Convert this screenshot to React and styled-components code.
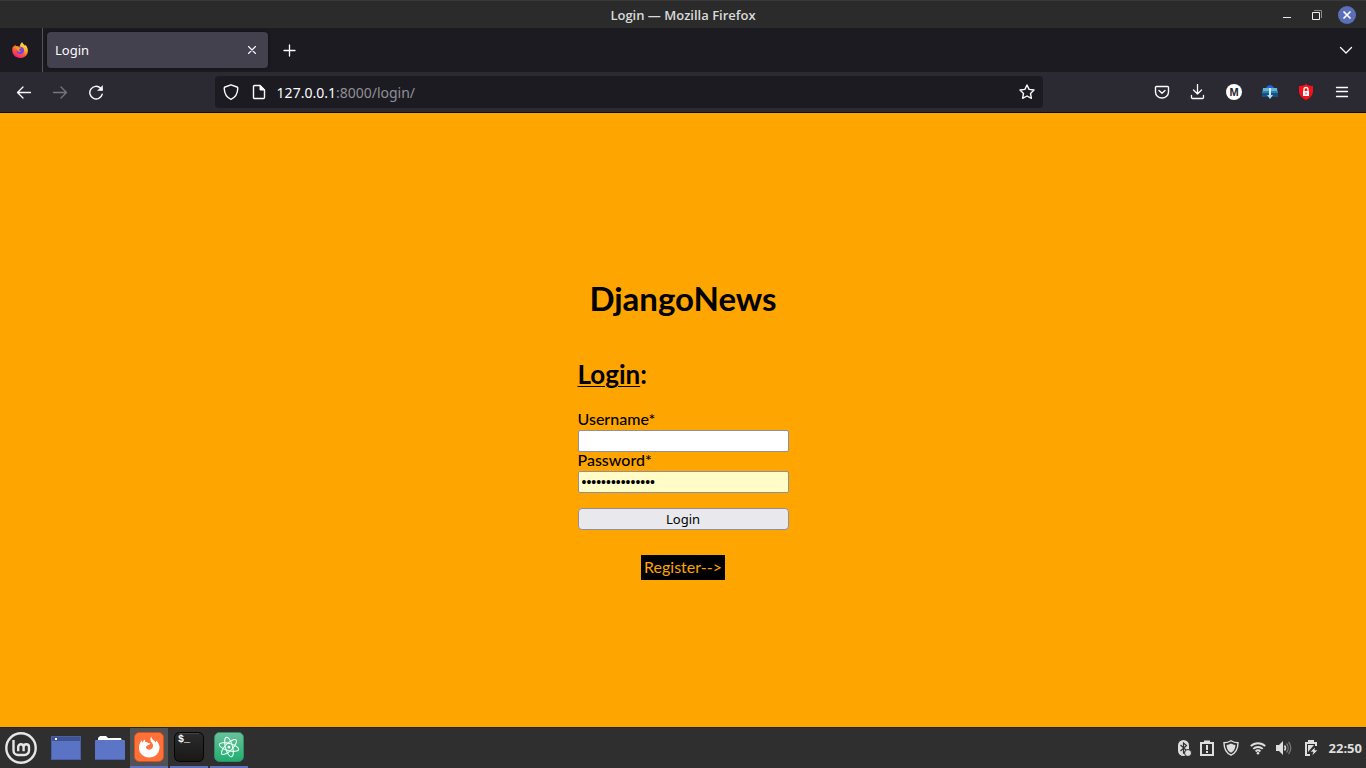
import React from "react";
import styled, { createGlobalStyle } from "styled-components";

const ui = '"Noto Sans", "Open Sans", sans-serif';
const display = 'Lato, "Open Sans", sans-serif';

const GlobalStyle = createGlobalStyle`
  *, *::before, *::after { box-sizing: border-box; }
  body { margin: 0; background: #ffa500; font-family: ${ui}; }
  button, input { font: inherit; color: inherit; margin: 0; }
  svg { display: block; flex: none; }
`;

const Desktop = styled.div`
  display: flex;
  flex-direction: column;
  min-height: 100vh;
`;

/* Window title bar */
const TitleBar = styled.header`
  display: grid;
  grid-template-columns: 1fr auto 1fr;
  align-items: center;
  height: 28px;
  padding: 0 4px;
  background: #2b2b2b;
  border-top: 1px solid #3a3a3a;
`;

const WindowTitle = styled.div`
  grid-column: 2;
  font-family: "Open Sans", sans-serif;
  font-size: 13px;
  font-weight: 600;
  line-height: 20px;
  color: #dadada;
`;

const WindowControls = styled.div`
  display: flex;
  justify-content: flex-end;
`;

const IconButton = styled.button`
  display: flex;
  align-items: center;
  justify-content: center;
  flex: none;
  width: ${(p) => p.$width || 36}px;
  height: ${(p) => p.$height || 32}px;
  padding: 0;
  border: 0;
  background: none;
  color: ${(p) => (p.disabled ? "#77767d" : "#fbfbfe")};
`;

/* Tab strip */
const TabStrip = styled.div`
  display: flex;
  align-items: center;
  height: 44px;
  background: #1c1b22;
`;

const ViewSlot = styled.div`
  display: flex;
  align-items: center;
  height: 44px;
  padding-right: 2px;
  margin-right: 4px;
  border-right: 1px solid #55545c;
`;

const Tab = styled.div`
  display: flex;
  align-items: center;
  justify-content: space-between;
  width: 221px;
  height: 36px;
  padding: 0 4px 0 8px;
  border-radius: 4px;
  background: #42414d;
  box-shadow: 0 0 4px rgba(0, 0, 0, 0.5);
  font-size: 13px;
  color: #fbfbfe;
`;

const Spacer = styled.div`
  flex: ${(p) => p.$grow || 1} 1 0;
`;

const TabsEnd = styled.div`
  padding-right: 2px;
`;

/* Navigation bar */
const NavBar = styled.nav`
  display: flex;
  align-items: center;
  height: 41px;
  padding: 0 6px;
  background: #2b2a33;
  border-bottom: 1px solid #0c0c0d;
`;

const AddressBar = styled.form`
  display: flex;
  align-items: center;
  flex: 828 1 0;
  height: 32px;
  padding: 0 2px;
  border-radius: 4px;
  background: #1c1b22;
`;

const Address = styled.div`
  flex: 1;
  padding: 2px 0 0 4px;
  font-size: 14px;
  line-height: 20px;
  color: #8f8f98;
`;

const Host = styled.span`
  color: #fbfbfe;
`;

/* Page */
const Page = styled.main`
  display: flex;
  flex: 1;
  flex-direction: column;
  align-items: center;
  justify-content: center;
  background: #ffa500;
  font-family: ${display};
  color: #000;
`;

const SiteName = styled.h1`
  margin: 0 0 42px;
  padding-top: 18px;
  font-size: 33px;
  font-weight: 700;
  line-height: 40px;
`;

const LoginForm = styled.form`
  display: flex;
  flex-direction: column;
  width: 211px;
`;

const FormTitle = styled.h2`
  margin: 0 0 23px;
  font-size: 26px;
  font-weight: 700;
  line-height: 28px;
`;

const Underlined = styled.span`
  text-decoration: underline;
  text-decoration-thickness: 1px;
  text-underline-offset: 2px;
`;

const FieldLabel = styled.label`
  padding-bottom: 4px;
  font-size: 16px;
  font-weight: 500;
  line-height: 15px;
`;

const Field = styled.input`
  height: 22px;
  padding: 1px 3px;
  border: 1px solid #8f8f9d;
  border-radius: 2px;
  outline: 0;
  background: ${(p) => (p.$filled ? "#fffcc8" : "#fff")};
  font-family: "Liberation Sans", sans-serif;
  font-size: 14px;
`;

const SubmitButton = styled.button`
  height: 22px;
  margin-top: 15px;
  padding: 0;
  border: 1px solid #8f8f9d;
  border-radius: 4px;
  background: #e9e9ed;
  font-family: ${ui};
  font-size: 13px;
  line-height: 20px;
`;

const RegisterLink = styled.a`
  margin-top: 25px;
  padding: 0 3px 2px;
  background: #000;
  color: #ffa500;
  font-size: 16px;
  line-height: 23px;
  text-decoration: none;
`;

/* Desktop panel */
const Panel = styled.footer`
  display: flex;
  align-items: center;
  justify-content: space-between;
  height: 41px;
  background: #2f2f2f;
  border-top: 1px solid #242424;
`;

const Launchers = styled.div`
  display: flex;
  align-items: center;
`;

const Running = styled.div`
  display: flex;
  gap: 2px;
  margin-left: 1px;
`;

const TaskButton = styled.button`
  display: flex;
  align-items: center;
  justify-content: center;
  width: 38px;
  height: 40px;
  padding: 0;
  border: 0;
  border-bottom: 2px solid #5f72c0;
  background: ${(p) => (p.$active ? "#525252" : "transparent")};
`;

const Tray = styled.div`
  display: flex;
  align-items: center;
  padding-right: 4px;
`;

const Clock = styled.time`
  padding-left: 2px;
  font-family: "Open Sans", sans-serif;
  font-size: 13px;
  font-weight: 700;
  line-height: 20px;
  color: #dedede;
`;

const Line = ({ size = 16, width = 1.4, children }) => (
  <svg width={size} height={size} viewBox={`0 0 ${size} ${size}`} fill="none" stroke="currentColor"
    strokeWidth={width} strokeLinecap="round" strokeLinejoin="round" aria-hidden="true">
    {children}
  </svg>
);

const FirefoxIcon = () => (
  <svg width="18" height="18" viewBox="0 0 18 18" aria-hidden="true">
    <defs>
      <linearGradient id="flame" x1="0.8" y1="0" x2="0.25" y2="1">
        <stop offset="0" stopColor="#fff44f" />
        <stop offset="0.35" stopColor="#ffb52e" />
        <stop offset="0.65" stopColor="#ff5634" />
        <stop offset="1" stopColor="#f0148c" />
      </linearGradient>
    </defs>
    <path d="M11.2 1c.3 1.4 1 2 2 2.8.4.3.6.8.8 1.3l.5-1.3c2.1 2.3 3 5.600 2 8.400C15.500 15.200 12.600 17 9.200 17 4.700 17 1.200 13.700 1.200 9.300c0-1.600.3-3.200 1.200-4.400l.3 1c.4-1 1-1.700 1.800-2.200l.1 1.700c.8-.3 1.700-.2 2.300.2l1.800.1c.4-1.900 1.200-3.500 2.500-4.700z" fill="url(#flame)" />
    <circle cx="9.300" cy="9.400" r="3.700" fill="#7843e0" />
    <path d="M4.500 5.400c1.600-.2 2.800.1 3.700 1l2.200.2c-.3.900-1.200 1.200-2.300 1.700-.3 1 .8 2 2.200 1.400-1 1.500-3.700 1.200-4.400-1-.4-1.200-.1-2.100-1.400-3.300z" fill="#ff980e" />
  </svg>
);

const MintIcon = () => (
  <svg width="34" height="34" viewBox="0 0 34 34" fill="none" stroke="#e6e6e6" aria-hidden="true">
    <circle cx="17" cy="17" r="14.700" strokeWidth="2.400" />
    <path d="M9.500 9v10.500a4.500 4.500 0 0 0 4.500 4.500h6.500a4.500 4.500 0 0 0 4.500-4.500v-3.500a2.700 2.700 0 0 0-5.400 0v4.300m0-4.300a2.700 2.700 0 0 0-5.400 0v4.300" strokeWidth="2.400" />
  </svg>
);

const DesktopIcon = () => (
  <svg width="30" height="24" viewBox="0 0 30 24" aria-hidden="true">
    <path d="M0 0h30v24H0z" fill="#5a73c4" />
    <path d="M0 0h30v5H0z" fill="#3f5390" />
    <path d="M4 2h2v2H4z" fill="#fff" />
    <path d="M.5.5h29v23H.5z" fill="none" stroke="#4860ab" />
  </svg>
);

const FolderIcon = () => (
  <svg width="30" height="26" viewBox="0 0 30 26" aria-hidden="true">
    <path d="M3 6V3l2-2h6l2 2h13l1 3z" fill="#fff" />
    <rect x="0" y="5" width="30" height="20" rx="1" fill="#5d75c6" />
    <path d="M.5 24.500h29" stroke="#485eaa" />
  </svg>
);

const FirefoxTile = () => (
  <svg width="30" height="30" viewBox="0 0 30 30" aria-hidden="true">
    <rect x=".5" y=".5" width="29" height="29" rx="5" fill="#ff7139" stroke="#c95524" />
    <path d="M17.200 4.500c.2 2 1.300 2.900 2.800 4 .8.600 1.300 1.300 1.700 2.200l.6-2.200c3 3 4 6.600 2.700 10.300-1.500 4.200-5.200 6.700-9.800 6.700C9.300 25.500 5 21.400 5 15.800c0-3 .9-5.600 2.700-7.300l.6 2c.6-1.200 1.500-2.200 2.700-2.900l.2 2.600c1-.3 2 0 2.800.7l2.300.4c-.3 1.200-1.600 1.700-2.900 2.300-1.300.6-1.500 1.300-1.300 2 .6 2 3.200 3 5.200 1.500 2.200-1.600 2.300-4.200.8-6-2-2.200-2.200-4.600-.9-6.600z" fill="#fff" />
  </svg>
);

const TerminalTile = () => (
  <svg width="30" height="30" viewBox="0 0 30 30" aria-hidden="true">
    <defs>
      <linearGradient id="term" x1="0" y1="0" x2="0" y2="1">
        <stop offset="0" stopColor="#2c2c2c" /><stop offset="1" stopColor="#181818" />
      </linearGradient>
    </defs>
    <rect x=".5" y=".5" width="29" height="29" rx="5" fill="url(#term)" stroke="#050505" />
    <path d="M5 1.500h20" stroke="#454545" />
    <text x="4" y="10" fill="#fff" fontFamily="Liberation Mono, monospace" fontWeight="700" fontSize="10">$_</text>
  </svg>
);

const AtomTile = () => (
  <svg width="30" height="30" viewBox="0 0 30 30" aria-hidden="true">
    <defs>
      <linearGradient id="atom" x1="0" y1="0" x2="0" y2="1">
        <stop offset="0" stopColor="#6cc09b" /><stop offset="1" stopColor="#1eae70" />
      </linearGradient>
    </defs>
    <rect x=".5" y=".5" width="29" height="29" rx="5" fill="url(#atom)" stroke="#348c66" />
    <g fill="none" stroke="#eafff5" strokeWidth="1.100">
      <ellipse cx="15" cy="15" rx="10" ry="3.600" transform="rotate(15 15 15)" />
      <ellipse cx="15" cy="15" rx="10" ry="3.600" transform="rotate(75 15 15)" />
      <ellipse cx="15" cy="15" rx="10" ry="3.600" transform="rotate(135 15 15)" />
    </g>
    <circle cx="15" cy="15" r="1.500" fill="#fff" />
  </svg>
);

const TrayIcon = ({ children }) => (
  <svg width="16" height="16" viewBox="0 0 16 16" fill="none" stroke="#dedede" strokeWidth="2" aria-hidden="true">
    {children}
  </svg>
);

export default function App() {
  return (
    <Desktop>
      <GlobalStyle />
      <TitleBar>
        <WindowTitle>Login — Mozilla Firefox</WindowTitle>
        <WindowControls>
          <IconButton $width={30} $height={26} aria-label="Minimize">
            <svg width="18" height="18"><path d="M5 11.500h8" stroke="#e8e8e8" /></svg>
          </IconButton>
          <IconButton $width={30} $height={26} aria-label="Restore">
            <svg width="18" height="18" fill="none">
              <path d="M6 4.500h7.500V12" stroke="#8a8a8a" />
              <path d="M4.500 6.500h7v7h-7z" stroke="#f0f0f0" />
            </svg>
          </IconButton>
          <IconButton $width={30} $height={26} aria-label="Close">
            <svg width="18" height="18">
              <circle cx="9" cy="9" r="9" fill="#5b6fb8" />
              <path d="M5.500 5.500l7 7m0-7l-7 7" stroke="#fff" strokeWidth="1.700" />
            </svg>
          </IconButton>
        </WindowControls>
      </TitleBar>

      <TabStrip>
        <ViewSlot>
          <IconButton $width={40} $height={36} aria-label="Firefox View"><FirefoxIcon /></IconButton>
        </ViewSlot>
        <Tab>
          Login
          <IconButton $width={24} $height={24} aria-label="Close tab">
            <Line width={1.1}><path d="M4.500 4.500l7 7m0-7l-7 7" /></Line>
          </IconButton>
        </Tab>
        <IconButton $width={42} aria-label="New tab">
          <Line width={1.300}><path d="M8.500 3v11M3 8.500h11" /></Line>
        </IconButton>
        <Spacer />
        <TabsEnd>
          <IconButton aria-label="List all tabs"><Line width={1.300}><path d="M2.500 5.500L8 11l5.500-5.500" /></Line></IconButton>
        </TabsEnd>
      </TabStrip>

      <NavBar aria-label="Browser">
        <IconButton aria-label="Back"><Line width={1.300}><path d="M14.500 8.500H1.500M7 3L1.500 8.500 7 14" /></Line></IconButton>
        <IconButton aria-label="Forward" disabled><Line width={1.300}><path d="M1.500 8.500h13M9 3l5.500 5.500L9 14" /></Line></IconButton>
        <IconButton aria-label="Reload">
          <Line>
            <path d="M14.200 10.200A6.300 6.300 0 1 1 12.500 4.100L14 5.500" />
            <path d="M14.500 2v4.500H10z" fill="currentColor" strokeWidth=".6" />
          </Line>
        </IconButton>
        <Spacer $grow={101} />
        <AddressBar onSubmit={(e) => e.preventDefault()}>
          <IconButton type="button" $width={28} aria-label="Tracking protection">
            <Line><path d="M8 .8L14 3c.6.3.8.700.8 1.300C14.600 9.500 12.300 13.500 8 15.300 3.700 13.500 1.400 9.500 1.200 4.300 1.200 3.700 1.400 3.300 2 3z" /></Line>
          </IconButton>
          <IconButton type="button" $width={28} aria-label="Site information">
            <Line><path d="M3.500 1.500h5.500L13.500 6v7.500a1 1 0 0 1-1 1h-9a1 1 0 0 1-1-1v-11a1 1 0 0 1 1-1z" /><path d="M9 1.500V6h4.500z" fill="currentColor" strokeWidth="1" /></Line>
          </IconButton>
          <Address><Host>127.0.0.1</Host>:8000/login/</Address>
          <IconButton type="button" $width={28} aria-label="Bookmark">
            <Line><path d="M8 1l2.100 4.400 4.900.6-3.500 3.400.9 4.900L8 12l-4.400 2.300.9-4.900L1 6l4.900-.6z" /></Line>
          </IconButton>
        </AddressBar>
        <Spacer $grow={101} />
        <IconButton aria-label="Save to Pocket">
          <Line><path d="M2.500 2.500h11a1 1 0 0 1 1 1V8a6.500 6 0 0 1-13 0V3.500a1 1 0 0 1 1-1zM5 6.500l3 2.800 3-2.800" /></Line>
        </IconButton>
        <IconButton aria-label="Downloads">
          <Line width={1.300}><path d="M7.500 .5v9.500M3.500 6l4 4 4-4M1.500 11.500v2a1 1 0 0 0 1 1h10a1 1 0 0 0 1-1v-2" /></Line>
        </IconButton>
        <IconButton aria-label="Account">
          <svg width="16" height="16">
            <circle cx="8" cy="8" r="8" fill="#fff" />
            <text x="8" y="12" textAnchor="middle" fontFamily="Liberation Sans, sans-serif" fontWeight="700" fontSize="11" fill="#25242b">M</text>
          </svg>
        </IconButton>
        <IconButton aria-label="Download helper">
          <svg width="16" height="16">
            <path d="M4 5c0-5 8-5 8 0z" fill="#1d68dc" />
            <path d="M1 4h14l1 2v7H0V6z" fill="#174f86" />
            <path d="M1 4h14v3H1z" fill="#6faecc" />
            <path d="M0 7h16v2H0z" fill="#2c80af" />
            <path d="M8 4v8" stroke="#c7efff" strokeWidth="2" />
            <path d="M5 11h6l-3 4z" fill="#a4dcf5" />
          </svg>
        </IconButton>
        <IconButton aria-label="Ad blocker">
          <svg width="16" height="16">
            <path d="M8 0c2 1.600 4.500 2 7 2v5c0 4-2.800 7.200-7 9-4.200-1.800-7-5-7-9V2c2.500 0 5-.4 7-2z" fill="#f5111a" />
            <path d="M5 7h6v5H5z" fill="#fff" />
            <path d="M6 7V5.500a2 2 0 0 1 4 0V7" stroke="#fff" strokeWidth="1.300" fill="none" />
            <path d="M8 8.500v2" stroke="#f5111a" />
          </svg>
        </IconButton>
        <IconButton aria-label="Menu"><Line width={1.300}><path d="M2.500 3.500h11M2.500 7.500h11M2.500 12.500h11" /></Line></IconButton>
      </NavBar>

      <Page>
        <SiteName>DjangoNews</SiteName>
        <LoginForm onSubmit={(e) => e.preventDefault()}>
          <FormTitle><Underlined>Login</Underlined>:</FormTitle>
          <FieldLabel htmlFor="username">Username*</FieldLabel>
          <Field id="username" type="text" />
          <FieldLabel htmlFor="password">Password*</FieldLabel>
          <Field id="password" type="password" defaultValue="djangonews12345" $filled />
          <SubmitButton type="submit">Login</SubmitButton>
        </LoginForm>
        <RegisterLink href="#register">Register--&gt;</RegisterLink>
      </Page>

      <Panel>
        <Launchers>
          <IconButton $width={42} $height={40} aria-label="Menu"><MintIcon /></IconButton>
          <IconButton $width={48} $height={40} aria-label="Show desktop"><DesktopIcon /></IconButton>
          <IconButton $width={39} $height={40} aria-label="Files"><FolderIcon /></IconButton>
          <Running>
            <TaskButton $active aria-label="Firefox"><FirefoxTile /></TaskButton>
            <TaskButton aria-label="Terminal"><TerminalTile /></TaskButton>
            <TaskButton aria-label="Atom"><AtomTile /></TaskButton>
          </Running>
        </Launchers>
        <Tray>
          <IconButton $width={22} aria-label="Bluetooth">
            <TrayIcon>
              <rect x="2" y="0" width="11" height="16" rx="5.500" fill="#dedede" stroke="none" />
              <path d="M4.500 5l6 5.500L7.500 13V3l3 2.500-6 5.500" stroke="#2f2f2f" strokeWidth="1.200" />
              <circle cx="12" cy="13" r="3.500" fill="#dedede" stroke="#2f2f2f" strokeWidth="1" />
            </TrayIcon>
          </IconButton>
          <IconButton $width={24} aria-label="Reports">
            <TrayIcon><path d="M2 3h12v12H2z" /><path d="M5 2h6" strokeWidth="3" /><path d="M8 5v5m0 1v2" /></TrayIcon>
          </IconButton>
          <IconButton $width={24} aria-label="Updates">
            <TrayIcon>
              <path d="M8 .8c2 1.400 4.400 2 7 2C15 9 12.800 13 8 15.200 3.200 13 1 9 1 2.800c2.600 0 5-.6 7-2z" strokeWidth="1.400" />
              <path d="M8 3.500c1.400.8 3 1.300 4.500 1.400C12.200 9 10.800 11.200 8 12.700 5.200 11.200 3.800 9 3.500 4.900 5 4.800 6.600 4.300 8 3.500z" fill="#dedede" stroke="none" />
            </TrayIcon>
          </IconButton>
          <IconButton $width={30} aria-label="Network">
            <TrayIcon>
              <path d="M.8 6.200a10.200 10.200 0 0 1 14.400 0M3.300 8.900a6.600 6.600 0 0 1 9.400 0M5.600 11.500a3.500 3.500 0 0 1 4.800 0" strokeWidth="1.900" />
              <circle cx="8" cy="13.300" r="1.300" fill="#dedede" stroke="none" />
            </TrayIcon>
          </IconButton>
          <IconButton $width={22} aria-label="Volume">
            <TrayIcon>
              <path d="M0 5h3l4-4v14l-4-4H0z" fill="#dedede" stroke="none" />
              <path d="M8.500 5.500a4 4 0 0 1 0 5" strokeWidth="1.500" />
              <path d="M10.500 3.500a7 7 0 0 1 0 9M12.500 2a9 9 0 0 1 0 12" stroke="#777" strokeWidth="1.300" />
            </TrayIcon>
          </IconButton>
          <IconButton $width={32} aria-label="Battery">
            <TrayIcon>
              <path d="M13 6V3H3v12h4" /><path d="M5 1h6" /><path d="M5 5h6L5 12z" fill="#dedede" stroke="none" />
              <path d="M12 7l-5 5h3l-1 4 6-6h-3z" fill="#dedede" stroke="#2f2f2f" strokeWidth=".7" />
            </TrayIcon>
          </IconButton>
          <Clock>22:50</Clock>
        </Tray>
      </Panel>
    </Desktop>
  );
}
